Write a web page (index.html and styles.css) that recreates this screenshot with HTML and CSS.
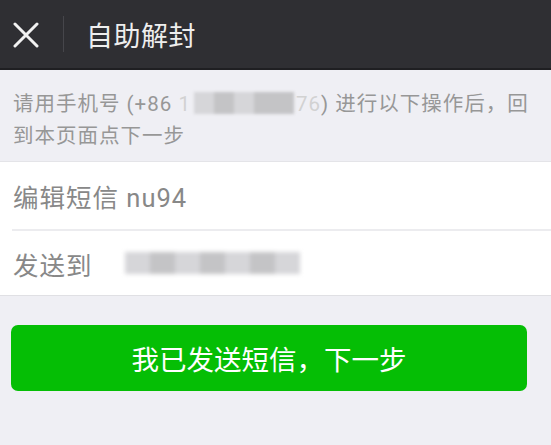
FILE: index.html
```html
<!DOCTYPE html>
<html lang="zh-CN">
<head>
<meta charset="utf-8">
<title>自助解封</title>
<link rel="stylesheet" href="styles.css">
</head>
<body>
<header class="topbar">
  <span class="close">
    <svg width="26" height="26" viewBox="0 0 26 26"><path d="M2 2 L24 24 M24 2 L2 24" stroke="#f2f2f2" stroke-width="3" stroke-linecap="round" fill="none"/></svg>
  </span>
  <span class="divider"></span>
  <h1 class="title">自助解封</h1>
</header>
<section class="notice">
  <p class="line">请用手机号 (+86 <span class="digit">1</span><span class="mask"><i></i><i class="d"></i><i></i><i class="d"></i><i class="d"></i></span><span class="digit">76</span>) 进行以下操作后，回</p>
  <p class="line">到本页面点下一步</p>
</section>
<section class="list">
  <div class="row">编辑短信 nu94</div>
  <div class="row"><span class="label">发送到</span><span class="mask2"><i></i><i class="d"></i><i></i><i class="d"></i><i></i><i class="d"></i><i></i></span></div>
</section>
<div class="actions">
  <button class="btn">我已发送短信，下一步</button>
</div>
</body>
</html>
```
FILE: styles.css
```css
html, body {
  margin: 0;
  padding: 0;
  background: #efeff4;
  font-family: Roboto, "Noto Sans CJK SC", sans-serif;
}
.topbar {
  height: 68px;
  background: #2f2f33;
  border-bottom: 2px solid #1f1f22;
  display: flex;
  align-items: center;
}
.close {
  display: flex;
  margin-left: 13px;
  margin-top: 1px;
}
.divider {
  width: 1px;
  height: 36px;
  background: #46464b;
  margin-left: 24px;
}
.title {
  margin: 0 0 0 22px;
  font-size: 27px;
  font-weight: normal;
  color: #eeeeee;
  letter-spacing: 0.5px;
}
.notice {
  padding: 18px 13px 9px 13px;
  height: 64px;
}
.line {
  margin: 0;
  font-size: 20.5px;
  line-height: 32px;
  color: #979797;
  letter-spacing: 1px;
  white-space: nowrap;
}
.digit {
  color: #d2d2d2;
}
.mask {
  display: inline-block;
  vertical-align: -3px;
  height: 22px;
  width: 100px;
  margin: 0 2px 0 3px;
  filter: blur(1.5px);
}
.mask i, .mask2 i {
  display: inline-block;
  width: 20%;
  height: 100%;
  background: #d6d6d9;
}
.mask2 i {
  width: 14.28%;
}
.mask i.d, .mask2 i.d {
  background: #c4c4c6;
}
.list {
  background: #ffffff;
  border-top: 1px solid #e4e4e8;
  border-bottom: 1px solid #e0e0e4;
  padding-left: 12px;
}
.row {
  height: 67px;
  display: flex;
  align-items: center;
  font-size: 25.5px;
  color: #888888;
  padding-left: 1px;
  letter-spacing: 1px;
}
.row + .row {
  border-top: 2px solid #ececef;
  height: 64px;
}
.label {
  width: 112px;
}
.mask2 {
  display: flex;
  height: 22px;
  width: 175px;
  filter: blur(2px);
}
.actions {
  padding: 29px 24px 0 11px;
}
.btn {
  display: block;
  width: 100%;
  height: 66px;
  border: 0;
  border-radius: 7px;
  background: #05be05;
  color: #ffffff;
  font-family: Roboto, "Noto Sans CJK SC", sans-serif;
  font-size: 27.5px;
  padding: 0;
}
```
